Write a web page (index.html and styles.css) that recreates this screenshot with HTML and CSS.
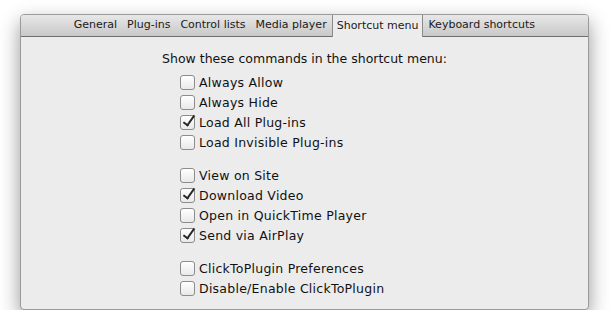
FILE: index.html
```html
<!DOCTYPE html>
<html lang="en">
<head>
    <meta charset="UTF-8">
    <title>ClickToPlugin Preferences</title>
    <link rel="stylesheet" href="styles.css">
</head>
<body>
    <div class="window">
        <div class="tabs">
            <span class="tab">General</span>
            <span class="tab">Plug-ins</span>
            <span class="tab">Control lists</span>
            <span class="tab">Media player</span>
            <span class="tab selected">Shortcut menu</span>
            <span class="tab">Keyboard shortcuts</span>
        </div>
        <div class="pane">
            <p class="heading">Show these commands in the shortcut menu:</p>
            <div class="options">
                <div class="group">
                    <label class="option"><span class="box"></span>Always Allow</label>
                    <label class="option"><span class="box"></span>Always Hide</label>
                    <label class="option"><span class="box checked"></span>Load All Plug-ins</label>
                    <label class="option"><span class="box"></span>Load Invisible Plug-ins</label>
                </div>
                <div class="group">
                    <label class="option"><span class="box"></span>View on Site</label>
                    <label class="option"><span class="box checked"></span>Download Video</label>
                    <label class="option"><span class="box"></span>Open in QuickTime Player</label>
                    <label class="option"><span class="box checked"></span>Send via AirPlay</label>
                </div>
                <div class="group">
                    <label class="option"><span class="box"></span>ClickToPlugin Preferences</label>
                    <label class="option"><span class="box"></span>Disable/Enable ClickToPlugin</label>
                </div>
            </div>
        </div>
    </div>
</body>
</html>
```

FILE: styles.css
```css
body {
    margin: 0;
    background: #ffffff;
    font-family: "DejaVu Sans", sans-serif;
    font-size: 12.5px;
    color: #111;
}
.window {
    margin: 14px 0 0 20px;
    width: 567px;
    height: 294px;
    background: #ececec;
    border: 1px solid #9a9a9a;
    border-radius: 4px;
    box-shadow: 0 8px 20px rgba(0, 0, 0, 0.42);
    overflow: hidden;
}
.tabs {
    display: flex;
    justify-content: flex-end;
    height: 21px;
    padding-right: 48px;
    background: linear-gradient(#e8e8e8, #c8c8c8);
    border-bottom: 1px solid #6f6f6f;
}
.tab {
    padding: 0 5px;
    line-height: 20px;
    font-size: 11px;
    color: #1a1a1a;
}
.tab.selected {
    padding: 0 4px;
    margin: 0 0 -1px;
    background: #ececec;
    border-left: 1px solid #8a8a8a;
    border-right: 1px solid #8a8a8a;
    line-height: 21px;
}
.pane {
    padding-top: 14px;
}
.heading {
    margin: 0 0 6px;
    text-align: center;
}
.options {
    margin-left: 159px;
    letter-spacing: 0.25px;
}
.group {
    margin-bottom: 13px;
}
.option {
    display: flex;
    align-items: center;
    height: 20px;
}
.box {
    width: 13px;
    height: 13px;
    margin-right: 4px;
    border: 1px solid #8c8c8c;
    border-radius: 3px;
    background: linear-gradient(#ffffff, #e9e9e9);
    position: relative;
}
.box.checked::after {
    content: "";
    position: absolute;
    left: 5px;
    top: -3px;
    width: 4px;
    height: 11px;
    border: solid #262626;
    border-width: 0 2.5px 2.5px 0;
    transform: rotate(35deg);
}
```
